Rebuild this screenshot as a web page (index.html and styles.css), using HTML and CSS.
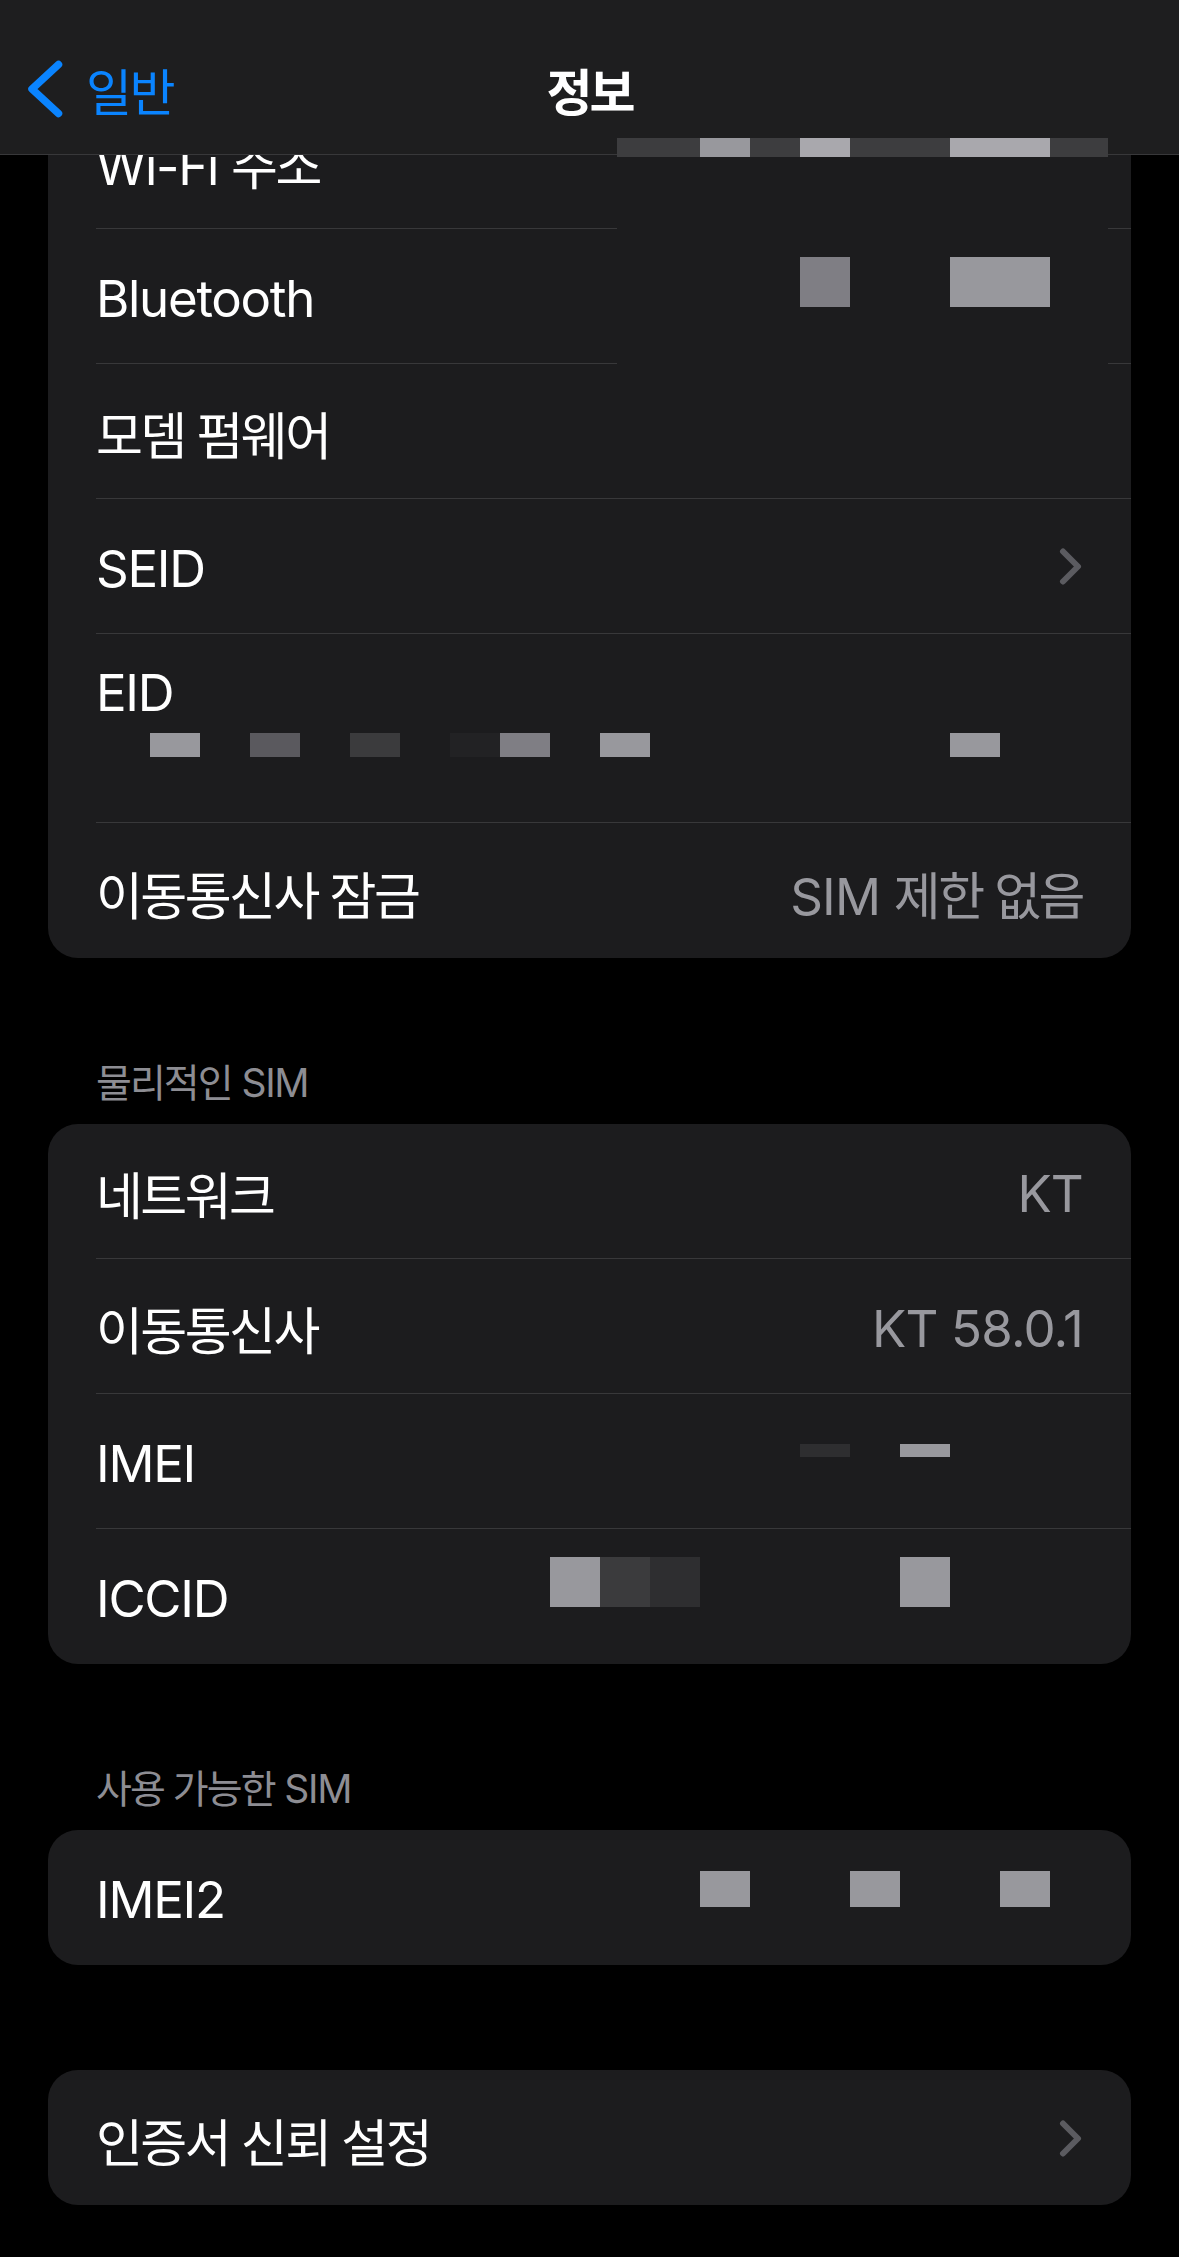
FILE: index.html
```html
<!DOCTYPE html>
<html lang="ko">
<head>
  <meta charset="UTF-8">
  <meta name="viewport" content="width=device-width, initial-scale=1.0">
  <title>정보</title>
  <link rel="stylesheet" href="styles.css">
</head>
<body>
  <header class="navbar">
    <a class="back" href="#">
      <svg class="back-icon" viewBox="0 0 40 60" width="40" height="60"><path d="M33.5 5.5 L7 30 L33.5 54.5"/></svg>
      <span class="ko">일반</span>
    </a>
    <h1 class="title ko">정보</h1>
    <span></span>
  </header>

  <!-- redacted Wi-Fi / Bluetooth addresses -->
  <div class="mosaic">
    <div class="strip strip-wifi">
      <i class="m m1"></i><i class="m"></i><i class="m m2"></i><i class="m"></i><i class="m"></i><i class="m m2"></i><i class="m m2"></i>
    </div>
    <div class="strip strip-bt">
      <i class="m m3"></i><i class="m"></i><i class="m"></i><i class="m m1"></i><i class="m m1"></i>
    </div>
  </div>

  <main class="page">
    <div class="group">
      <div class="row"><span class="label">Wi-Fi <span class="ko">주소</span></span></div>
      <div class="row"><span class="label">Bluetooth</span></div>
      <div class="row"><span class="label ko">모뎀 펌웨어</span></div>
      <div class="row">
        <span class="label">SEID</span>
        <svg class="chevron" viewBox="0 0 24 40" width="24" height="40"><path d="M4 5.5 L19 20.5 L4 35.5"/></svg>
      </div>
      <div class="row row-tall">
        <span class="label">EID</span>
        <div class="redact redact-eid">
          <i class="m m1"></i><i class="m"></i><i class="m m4"></i><i class="m"></i><i class="m m5"></i><i class="m"></i><i class="m m7"></i><i class="m m3"></i><i class="m"></i><i class="m m1"></i>
          <i class="m"></i><i class="m"></i><i class="m"></i><i class="m"></i><i class="m"></i><i class="m"></i><i class="m m1"></i>
        </div>
      </div>
      <div class="row">
        <span class="label ko">이동통신사 잠금</span>
        <span class="value">SIM <span class="ko">제한 없음</span></span>
      </div>
    </div>

    <h2 class="section-title"><span class="ko">물리적인</span> SIM</h2>
    <div class="group">
      <div class="row">
        <span class="label ko">네트워크</span>
        <span class="value">KT</span>
      </div>
      <div class="row">
        <span class="label ko">이동통신사</span>
        <span class="value">KT 58.0.1</span>
      </div>
      <div class="row">
        <span class="label">IMEI</span>
        <div class="redact redact-imei">
          <i class="m m6"></i><i class="m"></i><i class="m m1"></i>
        </div>
      </div>
      <div class="row">
        <span class="label">ICCID</span>
        <div class="redact redact-iccid">
          <i class="m m1"></i><i class="m m5"></i><i class="m m6"></i><i class="m"></i><i class="m"></i><i class="m"></i><i class="m"></i><i class="m m1"></i>
        </div>
      </div>
    </div>

    <h2 class="section-title"><span class="ko">사용 가능한</span> SIM</h2>
    <div class="group">
      <div class="row">
        <span class="label">IMEI2</span>
        <div class="redact redact-imei2">
          <i class="m m1"></i><i class="m"></i><i class="m"></i><i class="m m1"></i><i class="m"></i><i class="m"></i><i class="m m1"></i>
        </div>
      </div>
    </div>

    <div class="group group-spaced">
      <div class="row">
        <span class="label ko">인증서 신뢰 설정</span>
        <svg class="chevron" viewBox="0 0 24 40" width="24" height="40"><path d="M4 5.5 L19 20.5 L4 35.5"/></svg>
      </div>
    </div>
  </main>
</body>
</html>
```

FILE: styles.css
```css
body { margin: 0; background: #000; color: #fff; font-family: Inter, "Noto Sans CJK KR", sans-serif; font-size: 51px; letter-spacing: -1.3px; }
.ko { font-family: "Noto Sans CJK KR", sans-serif; letter-spacing: -0.05em; }

/* nav bar */
.navbar { position: fixed; top: 0; left: 0; right: 0; z-index: 10; height: 155px; box-sizing: border-box; padding: 23px 25px 0; display: grid; grid-template-columns: 1fr auto 1fr; align-items: center; background: #1e1e1f; border-bottom: 1px solid #38383a; }
.back { display: flex; align-items: center; gap: 21px; color: #0a84ff; text-decoration: none; }
.back .ko { font-size: 50px; }
.back-icon { fill: none; stroke: #0a84ff; stroke-width: 7.5; stroke-linecap: round; stroke-linejoin: round; }
.title { margin: 0; font-size: 50px; font-weight: 700; letter-spacing: -3px; }

/* list */
.page { padding: 94px 48px 52px; }
.group { background: #1c1c1e; border-radius: 30px; overflow: hidden; }
.group-spaced { margin-top: 105px; }
.row { position: relative; display: flex; align-items: center; justify-content: space-between; height: 135px; box-sizing: border-box; margin-left: 48px; padding: 4px 48px 0 0; border-bottom: 1px solid #38383a; }
.row:last-child { border-bottom: none; }
.row-tall { height: 189px; align-items: flex-start; padding-top: 28px; }
.value { color: #98989e; letter-spacing: -0.8px; }
.value .ko { letter-spacing: -0.05em; }
.chevron { fill: none; stroke: #5b5b60; stroke-width: 6; stroke-linecap: round; stroke-linejoin: round; margin-top: -4px; }
.section-title { margin: 0; height: 47px; padding: 99px 48px 20px; font-size: 39px; line-height: 47px; font-weight: 400; color: #8d8d93; }

/* redacted values */
.redact { position: absolute; display: flex; }
.m { display: block; width: 50px; flex: none; }
.m1 { background: #98989d; }
.m2 { background: #a9a8ad; }
.m3 { background: #7f7e84; }
.m4 { background: #5a595e; }
.m5 { background: #3b3b3d; }
.m6 { background: #2e2e30; }
.m7 { background: #222224; }
.redact-eid { left: 54px; top: 99px; height: 24px; }
.redact-imei { left: 704px; top: 50px; height: 13px; }
.redact-iccid { left: 454px; top: 28px; height: 50px; }
.redact-imei2 { left: 604px; top: 41px; height: 36px; }

.mosaic { position: absolute; z-index: 20; top: 138px; left: 617px; width: 491px; height: 290px; background: #1c1c1e; }
.strip { display: flex; }
.strip-wifi { height: 19px; padding-left: 83px; background: #3d3d3f; }
.strip-bt { height: 50px; margin-top: 100px; padding-left: 183px; }
```
